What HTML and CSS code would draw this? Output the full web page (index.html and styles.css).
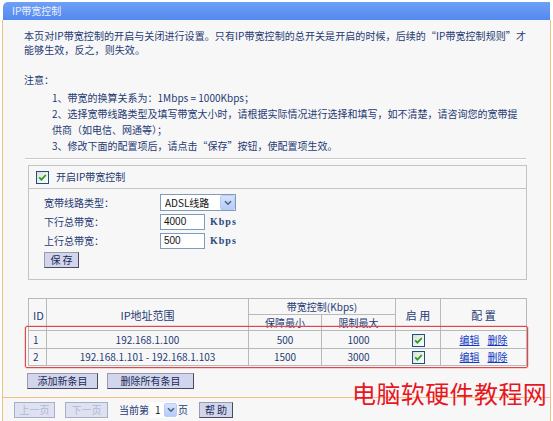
FILE: index.html
```html
<!DOCTYPE html>
<html lang="zh-CN">
<head>
<meta charset="utf-8">
<title>IP带宽控制</title>
<link rel="stylesheet" href="styles.css">
</head>
<body>
<div class="page">
  <div class="titlebar">IP带宽控制</div>
  <div class="panel">
    <p class="intro">本页对IP带宽控制的开启与关闭进行设置。只有IP带宽控制的总开关是开启的时候，后续的“IP带宽控制规则”才<br>能够生效，反之，则失效。</p>
    <div class="notes">
      <div class="notes-title">注意：</div>
      <div class="notes-list">
        <div>1、带宽的换算关系为：1Mbps = 1000Kbps；</div>
        <div>2、选择宽带线路类型及填写带宽大小时，请根据实际情况进行选择和填写，如不清楚，请咨询您的宽带提<br>供商（如电信、网通等）；</div>
        <div>3、修改下面的配置项后，请点击“保存”按钮，使配置项生效。</div>
      </div>
    </div>
    <div class="rule"></div>
    <div class="box">
      <div class="box-head">
        <span class="check"><svg viewBox="0 0 11 11" width="11" height="11"><path d="M2.2 5.4 L4.4 7.6 L8.8 3.0" fill="none" stroke="#21a121" stroke-width="1.8"/></svg></span>
        <span>开启IP带宽控制</span>
      </div>
      <div class="box-body">
        <div class="form">
          <span class="label">宽带线路类型：</span>
          <span class="select wide"><span class="select-text">ADSL线路</span><span class="select-arrow"><svg viewBox="0 0 8 6" width="8" height="6"><path d="M1 1.2 L4 4.2 L7 1.2" fill="none" stroke="#4d6185" stroke-width="1.6"/></svg></span></span>
          <span class="label">下行总带宽：</span>
          <span class="field"><span class="input">4000</span><span class="unit">Kbps</span></span>
          <span class="label">上行总带宽：</span>
          <span class="field"><span class="input">500</span><span class="unit">Kbps</span></span>
        </div>
        <span class="btn save">保 存</span>
      </div>
    </div>
    <div class="table-wrap">
      <table class="rules">
        <colgroup>
          <col class="c-id"><col class="c-ip"><col class="c-min"><col class="c-max"><col class="c-on"><col class="c-cfg">
        </colgroup>
        <tr class="h1">
          <th rowspan="2" class="left">ID</th>
          <th rowspan="2">IP地址范围</th>
          <th colspan="2">带宽控制(Kbps)</th>
          <th rowspan="2">启 用</th>
          <th rowspan="2">配 置</th>
        </tr>
        <tr class="h2">
          <th>保障最小</th>
          <th>限制最大</th>
        </tr>
        <tr class="r1">
          <td class="left">1</td>
          <td>192.168.1.100</td>
          <td>500</td>
          <td>1000</td>
          <td><span class="check"><svg viewBox="0 0 11 11" width="11" height="11"><path d="M2.2 5.4 L4.4 7.6 L8.8 3.0" fill="none" stroke="#21a121" stroke-width="1.8"/></svg></span></td>
          <td><a class="link">编辑</a><a class="link">删除</a></td>
        </tr>
        <tr class="r2">
          <td class="left">2</td>
          <td>192.168.1.101 - 192.168.1.103</td>
          <td>1500</td>
          <td>3000</td>
          <td><span class="check"><svg viewBox="0 0 11 11" width="11" height="11"><path d="M2.2 5.4 L4.4 7.6 L8.8 3.0" fill="none" stroke="#21a121" stroke-width="1.8"/></svg></span></td>
          <td><a class="link">编辑</a><a class="link">删除</a></td>
        </tr>
      </table>
      <div class="annotation"></div>
    </div>
    <div class="actions">
      <span class="btn add">添加新条目</span>
      <span class="btn delall">删除所有条目</span>
    </div>
  </div>
  <div class="footer">
    <span class="btn disabled prev">上一页</span>
    <span class="btn disabled next">下一页</span>
    <span class="pager">当前第<span class="select small"><span class="select-text">1</span><span class="select-arrow"><svg viewBox="0 0 8 6" width="8" height="6"><path d="M1 1.2 L4 4.2 L7 1.2" fill="none" stroke="#4d6185" stroke-width="1.6"/></svg></span></span>页</span>
    <span class="btn help">帮 助</span>
  </div>
  <div class="watermark">电脑软硬件教程网</div>
</div>
</body>
</html>
```

FILE: styles.css
```css
* { box-sizing: border-box; }
html, body { margin: 0; padding: 0; }
body {
  width: 553px;
  height: 421px;
  overflow: hidden;
  background: #ffffff;
  font-family: "Noto Sans CJK SC", sans-serif;
  font-size: 10px;
  line-height: 14px;
  color: #1f3a74;
}
.page {
  position: relative;
  padding-top: 2px;
  width: 553px;
}
.titlebar {
  margin: 0 3px 0 3px;
  height: 18px;
  line-height: 18px;
  padding-left: 9px;
  color: #e8efff;
  background: linear-gradient(#6fa0f6, #5389ef);
  border-radius: 5px 0 0 0;
}
.panel {
  margin: 0 2px 0 2px;
  border-left: 1px solid #f2c07e;
  border-right: 1px solid #f2c07e;
  border-bottom: 1px solid #f2c07e;
  background: #f7f7f7;
  padding: 9px 0 8px 21px;
}
.intro {
  margin: 0;
  white-space: nowrap;
  letter-spacing: 0.08px;
}
.notes {
  margin-top: 15px;
  line-height: 16px;
  white-space: nowrap;
}
.notes-list {
  margin-top: 2px;
  padding-left: 28px;
}
.rule {
  margin: 4px 0 0 1px;
  width: 501px;
  height: 2px;
  border-top: 1px solid #c9c9c9;
  border-bottom: 1px solid #ffffff;
}
.box {
  margin: 5px 0 0 4px;
  width: 499px;
  border: 1px solid #c4c4c4;
}
.box-head {
  height: 23px;
  display: flex;
  align-items: center;
  gap: 7px;
  padding-left: 7px;
  border-bottom: 1px solid #c4c4c4;
}
.check {
  display: inline-flex;
  align-items: center;
  justify-content: center;
  width: 13px;
  height: 13px;
  border: 1px solid #1c5180;
  background: linear-gradient(135deg, #dcdcd7, #ffffff);
  vertical-align: middle;
}
.box-body {
  padding: 4px 0 11px 15px;
}
.form {
  display: grid;
  grid-template-columns: 116px auto;
  grid-auto-rows: 19px;
  align-items: center;
}
.select {
  display: inline-flex;
  align-items: center;
  justify-content: space-between;
  height: 17px;
  border: 1px solid #7f9db9;
  background: #ffffff;
  color: #111111;
}
.select.wide { width: 76px; }
.select-text { padding-left: 4px; }
.select-arrow {
  display: inline-flex;
  align-items: center;
  justify-content: center;
  width: 15px;
  height: 15px;
  background: linear-gradient(#d6e3fd, #b5cbf7);
  border: 1px solid #b8cdf6;
  border-radius: 2px;
}
.field {
  display: flex;
  align-items: center;
  gap: 5px;
}
.input {
  display: inline-block;
  width: 45px;
  height: 16px;
  line-height: 14px;
  padding-left: 3px;
  border: 1px solid #7f9db9;
  background: #ffffff;
  color: #111111;
  font-family: "Liberation Sans", sans-serif;
  font-size: 10px;
}
.unit {
  font-family: "Liberation Serif", serif;
  font-weight: bold;
  letter-spacing: 1px;
  color: #2a4a80;
}
.btn {
  display: inline-flex;
  align-items: center;
  justify-content: center;
  height: 16px;
  border: 1px solid #4a4a5a;
  border-top-color: #9a9aaa;
  border-left-color: #9a9aaa;
  background: #d2d6ec;
  color: #1a2a55;
  line-height: 14px;
}
.save {
  margin-top: 2px;
  width: 35px;
}
.table-wrap {
  position: relative;
  margin: 18px 0 0 4px;
  width: 498px;
}
.rules {
  width: 498px;
  border-collapse: collapse;
  table-layout: fixed;
}
.c-id { width: 18px; }
.c-ip { width: 202px; }
.c-min { width: 73px; }
.c-max { width: 74px; }
.c-on { width: 45px; }
.c-cfg { width: 86px; }
.rules th, .rules td {
  border: 1px solid #b9b9b9;
  padding: 0;
  text-align: center;
  font-weight: normal;
  white-space: nowrap;
  color: #1f3a74;
}
.rules .left { text-align: left; padding-left: 4px; }
.rules .h1 th { height: 16px; }
.rules .h2 th { height: 16px; }
.rules .h1 th[rowspan] { font-size: 11px; }
.rules .r1 td { height: 18px; }
.rules .r2 td { height: 17px; }
.rules .check { display: inline-flex; }
.link {
  color: #0f3ac4;
  text-decoration: underline;
  margin: 0 4px;
}
.annotation {
  position: absolute;
  left: -3px;
  top: 28px;
  width: 503px;
  height: 42px;
  border: 1px solid #e0474c;
  border-radius: 2px;
  box-shadow: 0 0 0 0.5px rgba(224, 71, 76, 0.4);
}
.actions {
  display: flex;
  gap: 9px;
  margin: 7px 0 0 3px;
}
.add { width: 71px; }
.delall { width: 87px; }
.footer {
  margin: 0 2px 0 2px;
  height: 25px;
  border-left: 1px solid #f2c07e;
  border-right: 1px solid #f2c07e;
  border-bottom: 1px solid #f2c07e;
  background: #f7f7f7;
  display: flex;
  align-items: center;
  padding: 0 0 0 11px;
}
.disabled {
  color: #b0b8d4;
  background: #dde1f1;
  border-color: #a8aec4;
}
.prev { width: 41px; margin-right: 10px; }
.next { width: 43px; margin-right: 11px; }
.pager {
  display: inline-flex;
  align-items: center;
  margin-right: 11px;
}
.select.small {
  width: 28px;
  height: 16px;
  border-color: #ffffff;
  background: #ffffff;
  margin: 0 0 0 1px;
}
.select.small .select-arrow { width: 13px; height: 14px; }
.help { width: 34px; }
.watermark {
  position: absolute;
  left: 352px;
  top: 380px;
  font-family: "Noto Sans CJK SC", sans-serif;
  font-size: 24px;
  line-height: 26px;
  color: #e8161f;
  letter-spacing: 0.4px;
  white-space: nowrap;
}
```
